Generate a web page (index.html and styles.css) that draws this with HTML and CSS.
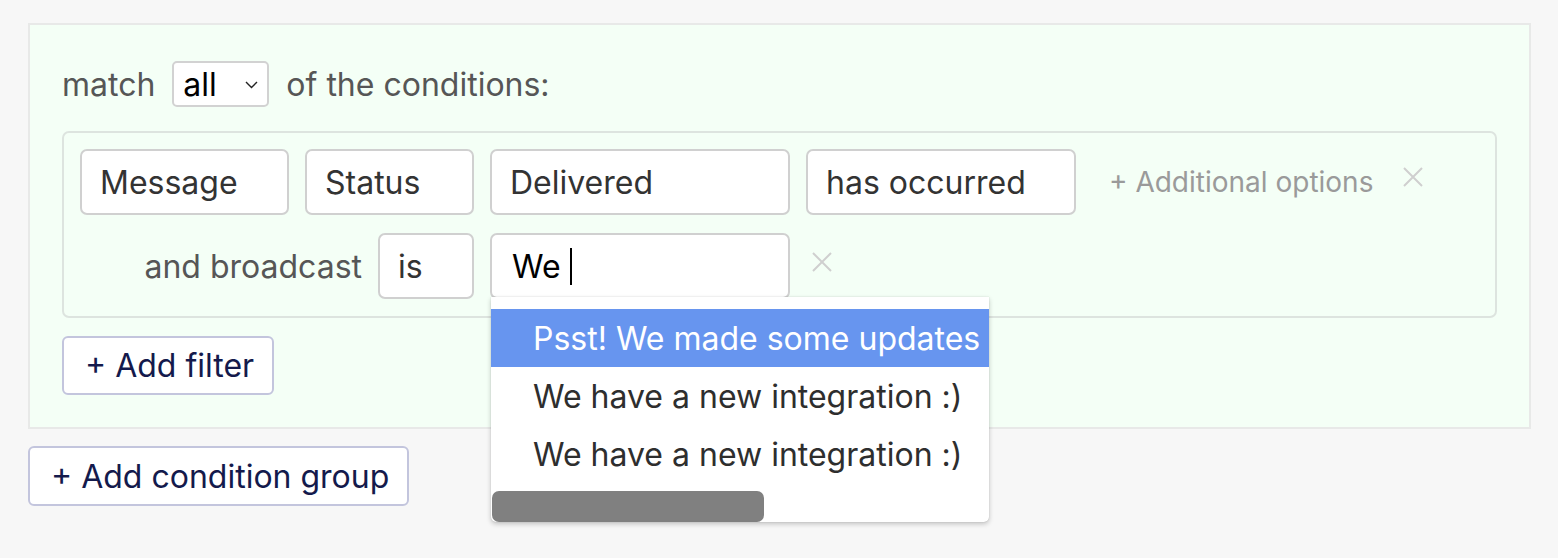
FILE: index.html
```html
<!DOCTYPE html>
<html lang="en">
<head>
<meta charset="utf-8">
<title>Conditions</title>
<link rel="stylesheet" href="styles.css">
</head>
<body>
<div class="page">
  <section class="group">
    <div class="match-row">
      <span class="muted-label">match</span>
      <span class="select">
        <span class="select-value">all</span>
        <svg class="chevron" width="13" height="8" viewBox="0 0 13 8"><path d="M1 1 L6.5 6.5 L12 1" fill="none" stroke="#222" stroke-width="1.4"/></svg>
      </span>
      <span class="muted-label">of the conditions:</span>
    </div>

    <div class="conditions">
      <div class="cond-row">
        <div class="field w-message">Message</div>
        <div class="field w-status">Status</div>
        <div class="field w-wide">Delivered</div>
        <div class="field w-occ">has occurred</div>
        <span class="additional">+ Additional options</span>
        <svg class="remove remove-top" width="20" height="20" viewBox="0 0 20 20"><path d="M1 1 L19 19 M19 1 L1 19" stroke="#cfcfcf" stroke-width="2"/></svg>
      </div>
      <div class="cond-row">
        <span class="sub-label">and broadcast</span>
        <div class="field w-is">is</div>
        <div class="combo">
          <div class="field w-wide field-active"><span class="typed">We</span><span class="caret"></span></div>
          <div class="dropdown">
            <div class="option option-active">Psst! We made some updates</div>
            <div class="option">We have a new integration :)</div>
            <div class="option">We have a new integration :)</div>
            <div class="scroll-thumb"></div>
          </div>
        </div>
        <svg class="remove remove-bottom" width="20" height="20" viewBox="0 0 20 20"><path d="M1 1 L19 19 M19 1 L1 19" stroke="#cfcfcf" stroke-width="2"/></svg>
      </div>
    </div>

    <button class="btn btn-filter">+ Add filter</button>
  </section>

  <button class="btn btn-group">+ Add condition group</button>
</div>
</body>
</html>
```

FILE: styles.css
```css
* { box-sizing: border-box; }

html, body {
  margin: 0;
  background: #f7f7f7;
}

body {
  font-family: Inter, "Noto Sans", sans-serif;
  font-size: 32px;
  color: #333;
  min-height: 558px;
}

.page {
  padding: 23px 0 0 28px;
  width: 1531px;
  min-height: 558px;
}

.group {
  background: #f4fff6;
  border: 2px solid #e8e9e8;
  padding: 36px 32px 32px 32px;
  height: 406px;
}

.match-row {
  display: flex;
  align-items: center;
  height: 46px;
  gap: 17px;
}

.muted-label {
  color: #565656;
}

.select {
  display: flex;
  align-items: center;
  justify-content: space-between;
  width: 97px;
  height: 46px;
  border: 2px solid #d2d2d2;
  border-radius: 5px;
  background: #fff;
  padding: 0 9px 0 9px;
  color: #000;
}

.chevron { margin-top: 1px; }

.conditions {
  margin-top: 24px;
  border: 2px solid #dde4df;
  border-radius: 7px;
  padding: 16px 16px 17px 16px;
  display: flex;
  flex-direction: column;
  gap: 18px;
}

.cond-row {
  display: flex;
  align-items: center;
  gap: 16px;
  height: 66px;
}

.field {
  height: 66px;
  border: 2px solid #d0d0d0;
  border-radius: 7px;
  background: #fff;
  padding: 0 18px;
  display: flex;
  align-items: center;
  color: #333;
  white-space: nowrap;
}

.w-message { width: 209px; }
.w-status { width: 169px; }
.w-wide { width: 300px; }
.w-occ { width: 270px; }
.w-is { width: 96px; }

.field-active {
  color: #000;
  padding-left: 20px;
}

.caret {
  display: inline-block;
  width: 2px;
  height: 37px;
  background: #000;
  margin-left: 9px;
}

.additional {
  color: #9a9a9a;
  font-size: 28px;
  margin-left: 17px;
}

.remove { flex: none; }

.remove-top {
  margin-left: 14px;
  margin-top: -10px;
}

.remove-bottom {
  margin-left: 6px;
  margin-top: -8px;
}

.sub-label {
  width: 282px;
  text-align: right;
  color: #565656;
}

.combo {
  position: relative;
}

.dropdown {
  position: absolute;
  left: 1px;
  top: 64px;
  width: 498px;
  height: 225px;
  background: #fff;
  padding-top: 12px;
  border-radius: 0 0 5px 5px;
  box-shadow: 0 2px 5px rgba(0,0,0,0.22), 0 0 1px rgba(0,0,0,0.25);
  z-index: 5;
}

.option {
  height: 58px;
  display: flex;
  align-items: center;
  padding-left: 42px;
  white-space: nowrap;
  color: #2e2e2e;
}

.option-active {
  background: #6795ef;
  color: #fff;
}

.scroll-thumb {
  position: absolute;
  left: 1px;
  bottom: 0;
  width: 272px;
  height: 31px;
  background: #808080;
  border-radius: 7px;
}

.btn {
  font-family: Inter, "Noto Sans", sans-serif;
  font-size: 32px;
  color: #141a4c;
  background: #fff;
  border: 2px solid #c3c5dd;
  border-radius: 6px;
  display: block;
  margin: 0;
  cursor: pointer;
}

.btn-filter {
  margin-top: 18px;
  width: 212px;
  height: 59px;
  padding: 0 0 0 21px;
  text-align: left;
}

.btn-group {
  margin-top: 17px;
  width: 381px;
  height: 60px;
  padding: 0 0 0 21px;
  text-align: left;
}
```
